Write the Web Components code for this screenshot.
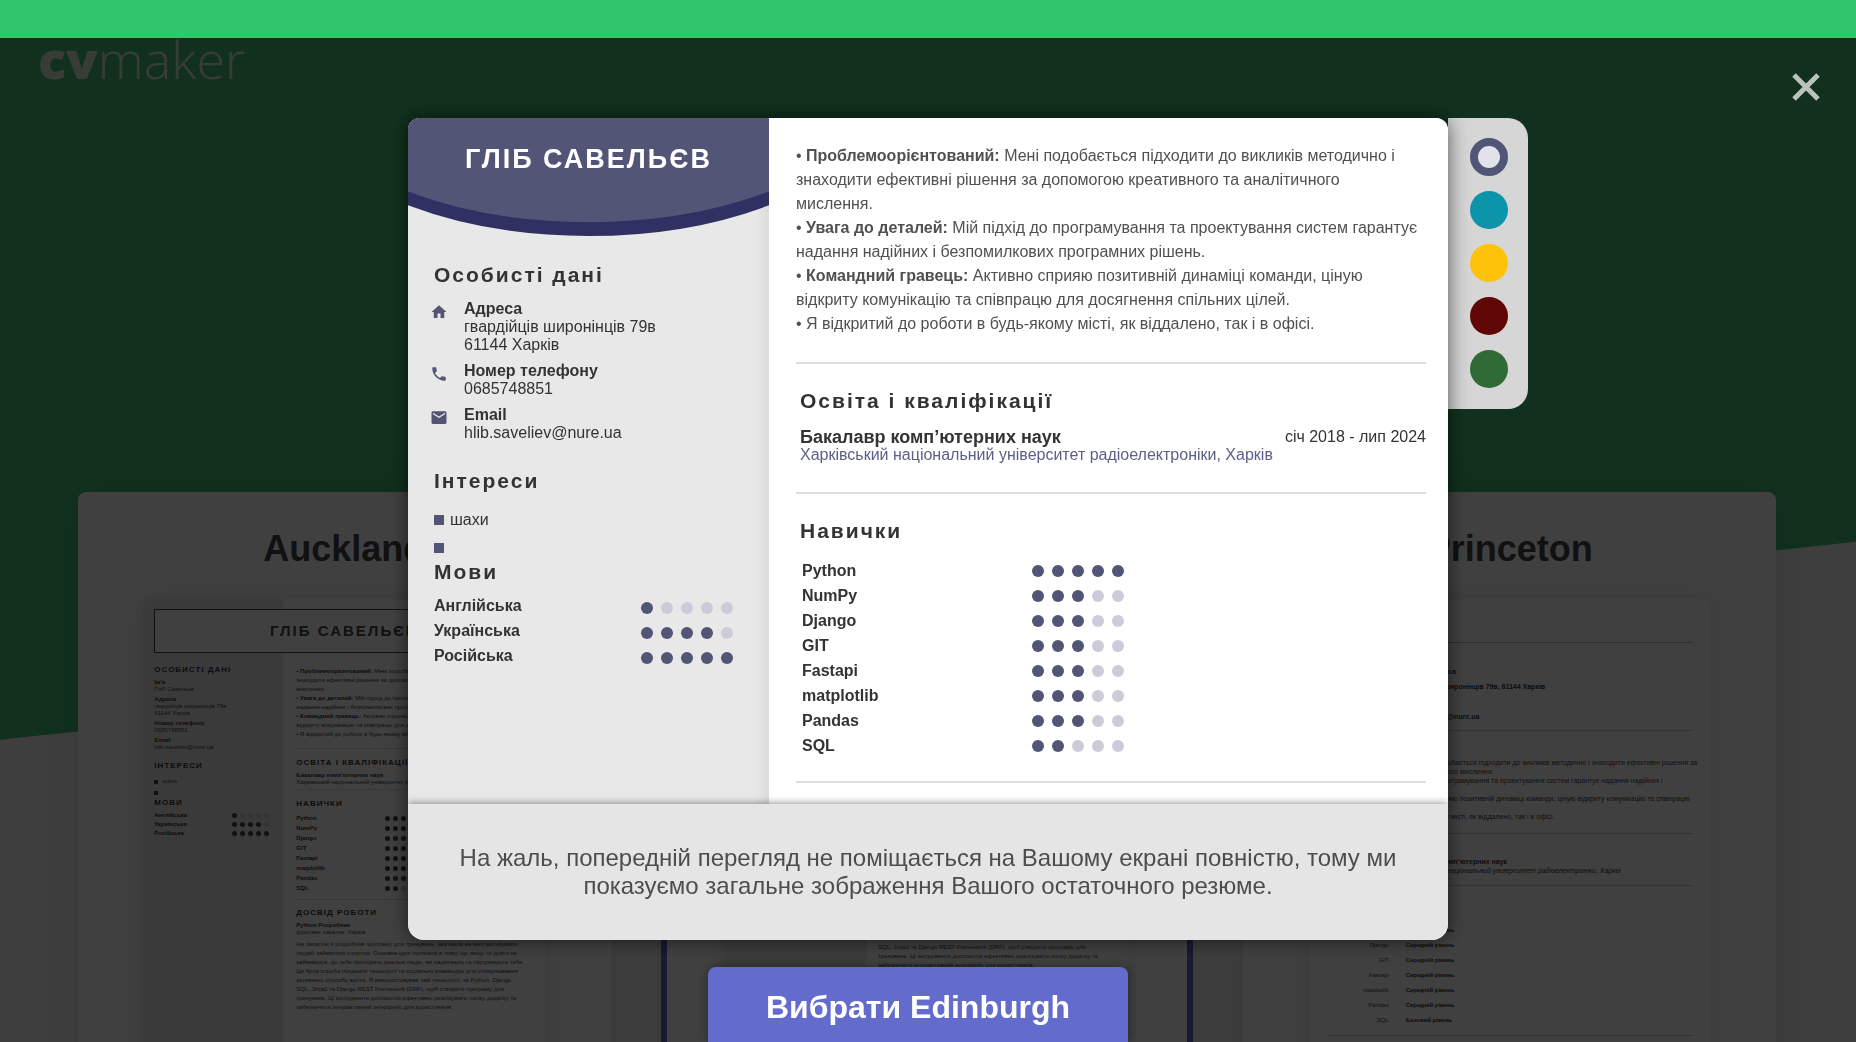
<!DOCTYPE html>
<html lang="uk">
<head>
<meta charset="utf-8">
<title>cvmaker</title>
<style>
  html, body { margin: 0; height: 100%; }
  body { font-family: "Liberation Sans", Arial, sans-serif; color: #333; overflow: hidden; }
</style>
</head>
<body>
<cv-app></cv-app>
<script>
const define = (name, html, setup) => {
  const template = document.createElement('template');
  template.innerHTML = html;
  customElements.define(name, class extends HTMLElement {
    constructor() {
      super();
      this.attachShadow({ mode: 'open' }).appendChild(template.content.cloneNode(true));
    }
    connectedCallback() { if (setup) setup(this, this.shadowRoot); }
  });
};

/* Five-dot level indicator */
define('dot-rating', `
<style>
  :host { display: flex; gap: var(--dot-gap, 8px); }
  i { width: var(--dot, 12px); height: var(--dot, 12px); border-radius: 50%; background: var(--dot-off, #cccbd7); }
  i.on { background: var(--dot-on, #525575); }
</style>`, (el, root) => {
  const level = Number(el.getAttribute('level'));
  el.setAttribute('role', 'img');
  for (let n = 1; n <= 5; n++) {
    const dot = document.createElement('i');
    if (n <= level) dot.className = 'on';
    root.appendChild(dot);
  }
});

define('site-logo', `
<style>
  :host { display: block; font: 300 52px/60px "Open Sans", sans-serif; color: #e0f0dc; }
  a { color: inherit; text-decoration: none; }
  b { font-weight: 800; }
</style>
<a href="#"><b>cv</b>maker</a>`);

/* Template card in the gallery */
define('template-card', `
<style>
  :host { display: flex; flex-direction: column; align-items: center; min-width: 0; box-sizing: border-box;
    background: #fff; border-radius: 8px; box-shadow: 0 0 60px rgba(0,0,0,.1); }
  :host([selected]) { border: 6px solid #6064c8; }
  h2 { min-height: 42px; margin: 36px 0 29px; font: bold 36px/42px "Liberation Sans", Arial, sans-serif; color: #444; }
  .sheet { width: 402px; flex: 1; border-radius: 8px; background: #fff; overflow: hidden; box-shadow: 0 0 24px rgba(0,0,0,.13); display: flex; flex-direction: column; }
  :host([selected]) h2 { margin-top: 30px; }
</style>
<h2></h2><div class="sheet"><slot></slot></div>`, (el, root) => {
  root.querySelector('h2').textContent = el.getAttribute('name') || '';
});

const summary = [
  ['Проблемоорієнтований:', 'Мені подобається підходити до викликів методично і', 'знаходити ефективні рішення за допомогою креативного та аналітичного', 'мислення.'],
  ['Увага до деталей:', 'Мій підхід до програмування та проектування систем гарантує', 'надання надійних і безпомилкових програмних рішень.'],
  ['Командний гравець:', 'Активно сприяю позитивній динаміці команди, ціную', 'відкриту комунікацію та співпрацю для досягнення спільних цілей.']
];
const summaryHtml = summary.map(([t, ...l]) => `• <b>${t}</b> ${l.join('<br>')}<br>`).join('') +
  '• Я відкритий до роботи в будь-якому місті, як віддалено, так і в офісі.';
const skills = [['Python', 5], ['NumPy', 3], ['Django', 3], ['GIT', 3], ['Fastapi', 3], ['matplotlib', 3], ['Pandas', 3], ['SQL', 2]];
const langs = [['Англійська', 1], ['Українська', 4], ['Російська', 5]];
const rows = list => list.map(([n, l]) => `<div class="row"><b>${n}</b><dot-rating level="${l}" aria-label="${l} / 5"></dot-rating></div>`).join('');

/* Auckland miniature */
define('resume-auckland', `
<style>
  :host { flex: 1; display: grid; grid-template-columns: 140px 1fr; grid-template-rows: auto 1fr; white-space: nowrap;
    background: linear-gradient(90deg, #e8e8e8 140px, #fff 140px); font-size: 6px; line-height: 7px; color: #444;
    --dot: 5px; --dot-gap: 3px; --dot-on: #444; --dot-off: #ccc; }
  .name { grid-column: 1 / 3; margin: 10px 11px 0; border: 1px solid #444; background: #fff; height: 42px; line-height: 41px;
    text-align: center; font-size: 15px; font-weight: bold; letter-spacing: 2px; color: #444; }
  h3 { margin: 0; font-size: 8px; line-height: 10px; letter-spacing: 1px; color: #333; }
  b { color: #333; }
  p { margin: 0; }
  .side { padding: 12px 14px 0 11px; }
  .side p { margin-bottom: 3px; }
  .side h3 { margin: 10px 0 5px; }
  .side h3:first-child { margin: 0 0 4px; }
  ul { margin: 0; padding: 0; list-style: none; }
  li { display: flex; align-items: center; gap: 4px; height: 11px; }
  li::before { content: ""; width: 4px; height: 4px; background: #444; }
  .side h3.tight { margin: 0 0 3px; }
  .side .row { display: flex; justify-content: space-between; align-items: center; height: 9px; }
  .main { padding: 14px 12px 0 13px; }
  .main h3 { margin-bottom: 4px; }
  .text { line-height: 9px; }
  hr { border: 0; height: 1px; background: #ddd; margin: 9px 0; }
  .main hr.near { margin: 3px 0 9px; }
  .main hr.after { margin: 6px 0 8px; }
  .main .row { display: grid; grid-template-columns: 89px 1fr; align-items: center; line-height: 10px; height: 10px; }
</style>
<div class="name">ГЛІБ САВЕЛЬЄВ</div>
<div class="side">
  <h3>ОСОБИСТІ ДАНІ</h3>
  <p><b>Ім'я</b><br>Гліб Савельєв</p>
  <p><b>Адреса</b><br>гвардійців широнінців 79в<br>61144 Харків</p>
  <p><b>Номер телефону</b><br>0685748851</p>
  <p><b>Email</b><br>hlib.saveliev@nure.ua</p>
  <h3>ІНТЕРЕСИ</h3>
  <ul><li>шахи</li><li></li></ul>
  <h3 class="tight">МОВИ</h3>
  ${rows(langs)}
</div>
<div class="main">
  <p class="text">${summaryHtml}</p>
  <hr>
  <h3>ОСВІТА І КВАЛІФІКАЦІЇ</h3>
  <p><b>Бакалавр комп’ютерних наук</b><br>Харківський національний університет радіоелектроніки, Харків</p>
  <hr class="near">
  <h3>НАВИЧКИ</h3>
  ${rows(skills)}
  <hr class="after">
  <h3>ДОСВІД РОБОТИ</h3>
  <p><b>Python Розробник</b><br>фриланс хакатон, Харків</p>
  <slot></slot>
</div>`);

const jobLines = [
  'На хакатоні я розробляв програму для тренувань, яка мала на меті мотивувати',
  'людей займатися спортом. Основна ідея полягала в тому, що якщо ти довго не',
  'займаєшся, до тебе приходять реальні люди, які надихають та підтримують тебе.',
  'Це була спроба поєднати технології та соціальну взаємодію для стимулювання',
  'активного способу життя. Я використовував такі технології, як Python, Django,',
  'SQL, Jinja2 та Django REST Framework (DRF), щоб створити програму для',
  'тренувань. Ці інструменти допомогли ефективно реалізувати логіку додатку та',
  'забезпечити інтерактивний інтерфейс для користувачів.'
];
define('job-text', `
<style>
  :host { display: block; font-size: 6px; line-height: 9px; white-space: nowrap; color: #444; }
  p { margin: 4px 0 0; }
</style><p></p>`, (el, root) => {
  const from = Number(el.getAttribute('from') || 0);
  root.querySelector('p').innerHTML = jobLines.slice(from).join('<br>');
});

/* Edinburgh miniature: only its lower part shows below the preview */
define('resume-edinburgh-mini', `
<style>
  :host { flex: 1; display: flex; background: linear-gradient(90deg, #e8e8e8 140px, #fff 140px); }
  .main { margin-left: 152px; padding-top: 340px; }
</style>
<div class="main"><job-text from="5"></job-text></div>`);

/* Princeton miniature */
define('resume-princeton', `
<style>
  :host { flex: 1; display: block; padding: 43px 18px 0 19px; font-size: 7px; line-height: 9px; white-space: nowrap; color: #444; }
  hr { border: 0; height: 1px; background: #ccc; margin: 0; }
  hr.dark { background: #bbb; }
  dl { display: grid; grid-template-columns: 61px 1fr; column-gap: 17px; margin: 0; }
  dt { text-align: right; } dd { margin: 0; font-weight: bold; color: #333; }
  .person { padding: 21px 0 6px; line-height: 15px; }
  .text { margin: 0; padding: 27px 0 12px; }
  .edu { padding: 23px 0 10px; }
  .edu i { font-weight: normal; }
  .skills { padding: 22px 0 7px; font-size: 6px; line-height: 15px; }
</style>
<hr class="dark">
<dl class="person">
  <dt>Ім'я</dt><dd>Гліб Савельєв</dd>
  <dt>Адреса</dt><dd>гвардійців широнінців 79в, 61144 Харків</dd>
  <dt>Телефон</dt><dd>0685748851</dd>
  <dt>Email</dt><dd>hlib.saveliev@nure.ua</dd>
</dl>
<hr>
<p class="text">• <b>Проблемоорієнтований:</b> Мені подобається підходити до викликів методично і знаходити ефективні рішення за<br>допомогою креативного та аналітичного мислення.<br>• <b>Увага до деталей:</b> Мій підхід до програмування та проектування систем гарантує надання надійних і<br>безпомилкових програмних рішень.<br>• <b>Командний гравець:</b> Активно сприяю позитивній динаміці команди, ціную відкриту комунікацію та співпрацю<br>для досягнення спільних цілей.<br>• Я відкритий до роботи в будь-якому місті, як віддалено, так і в офісі.</p>
<hr>
<dl class="edu"><dt></dt><dd>Бакалавр комп’ютерних наук<br><i>Харківський національний університет радіоелектроніки, Харків</i></dd></dl>
<hr>
<dl class="skills">${skills.map(([n, l]) => `<dt>${n}</dt><dd>${l === 5 ? 'Експерт' : l === 2 ? 'Базовий рівень' : 'Середній рівень'}</dd>`).join('')}</dl>
<hr>`);

/* Full Edinburgh résumé in the preview */
define('resume-edinburgh', `
<style>
  :host { display: grid; grid-template-columns: 361px 1fr; background: #fff; font-size: 16px; line-height: 18px; }
  aside { background: linear-gradient(90deg, transparent 96%, rgba(0,0,0,.05)), #e8e8e8; }
  header { display: grid; }
  header > * { grid-area: 1 / 1; }
  svg { display: block; }
  header svg { width: 100%; height: 119px; }
  h1 { margin: 0; padding-top: 25px; text-align: center; font-size: 27px; line-height: 32px; letter-spacing: 2px; color: #fff; }
  h2 { margin: 0; font-size: 21px; line-height: 24px; letter-spacing: 2px; }
  .side { padding: 26px 36px 0 26px; }
  .contact { display: grid; grid-template-columns: 30px 1fr; row-gap: 8px; margin: 13px 0 27px; }
  .contact svg { width: 18px; height: 18px; margin: 3px 0 0 -4px; fill: #525575; }
  p { margin: 0; }
  ul { margin: 18px 0 3px; padding: 0; list-style: none; display: grid; gap: 10px; }
  li { display: flex; align-items: center; gap: 6px; height: 18px; }
  li::before { content: ""; width: 10px; height: 10px; background: #525575; }
  .row { display: flex; justify-content: space-between; align-items: center; height: 25px; }
  .langs { margin-top: 9px; }
  .langs dot-rating { margin-top: 4px; }
  main { padding: 26px 22px 0 27px; }
  .text { line-height: 24px; color: #505050; white-space: nowrap; }
  hr { border: 0; height: 2px; background: #ddd; margin: 26px 0 25px; }
  section { padding-left: 4px; }
  .edu { display: grid; grid-template-columns: 1fr auto; margin-top: 15px; white-space: nowrap; }
  .edu b { font-size: 18px; }
  .edu a { grid-column: 1 / 3; color: #5c5f89; text-decoration: none; }
  .skills { margin-top: 15px; }
  .skills .row { display: grid; grid-template-columns: 230px 1fr; padding-left: 2px; }
  .skills b { padding-top: 1px; }
  hr.edge { margin: 28px 0 25px; }
  hr.last { margin: 23px 0 25px; }
</style>
<aside>
  <header>
    <svg viewBox="0 0 361 120" preserveAspectRatio="none" aria-hidden="true">
      <path fill="#2e3161" d="M0 0H361V88Q280 119 180.500 119Q81 119 0 88Z"/>
      <path fill="#525575" d="M0 0H361V74Q280 105 180.500 105Q81 105 0 74Z"/>
    </svg>
    <h1>ГЛІБ САВЕЛЬЄВ</h1>
  </header>
  <div class="side">
    <h2>Особисті дані</h2>
    <div class="contact">
      <svg viewBox="0 0 24 24" aria-hidden="true"><path d="M10 20v-6h4v6h5v-8h3L12 3 2 12h3v8z"/></svg>
      <p><b>Адреса</b><br>гвардійців широнінців 79в<br>61144 Харків</p>
      <svg viewBox="0 0 24 24" aria-hidden="true"><path d="M20 15.500c-1.250 0-2.450-.200-3.570-.570-.350-.110-.740-.030-1.020.240l-2.200 2.200c-2.830-1.440-5.150-3.750-6.590-6.590l2.200-2.210c.280-.260.360-.650.250-1C8.700 6.450 8.500 5.250 8.500 4c0-.550-.450-1-1-1H4c-.550 0-1 .450-1 1 0 9.390 7.610 17 17 17 .550 0 1-.450 1-1v-3.500c0-.550-.450-1-1-1z"/></svg>
      <p><b>Номер телефону</b><br>0685748851</p>
      <svg viewBox="0 0 24 24" aria-hidden="true"><path d="M20 3H4c-1.100 0-2 .900-2 2v13c0 1.100.900 2 2 2h16c1.100 0 2-.900 2-2V5c0-1.100-.900-2-2-2zm0 4l-8 5-8-5V5l8 5 8-5z"/></svg>
      <p><b>Email</b><br>hlib.saveliev@nure.ua</p>
    </div>
    <h2>Інтереси</h2>
    <ul><li>шахи</li><li></li></ul>
    <h2>Мови</h2>
    <div class="langs">${rows(langs)}</div>
  </div>
</aside>
<main>
  <p class="text">${summaryHtml}</p>
  <hr>
  <section>
    <h2>Освіта і кваліфікації</h2>
    <div class="edu"><b>Бакалавр комп’ютерних наук</b><span>січ 2018 - лип 2024</span>
    <a href="#">Харківський національний університет радіоелектроніки, Харків</a></div>
  </section>
  <hr class="edge">
  <section>
    <h2>Навички</h2>
    <div class="skills">${rows(skills)}</div>
  </section>
  <hr class="last">
</main>`);

define('color-picker', `
<style>
  :host { display: block; background: #d6d6d6; border-radius: 0 20px 20px 0; }
  fieldset { border: 0; margin: 0; padding: 20px 20px 21px 22px; display: grid; gap: 15px; }
  input { appearance: none; display: block; margin: 0; width: 38px; height: 38px; border-radius: 50%; background: var(--c); }
  input:checked { background: #e2e3ea; border: 8px solid var(--c); }
</style>
<fieldset aria-label="Колір">
  <input type="radio" name="c" checked style="--c:#525575" aria-label="Синій">
  <input type="radio" name="c" style="--c:#0b94aa" aria-label="Бірюзовий">
  <input type="radio" name="c" style="--c:#ffc20a" aria-label="Жовтий">
  <input type="radio" name="c" style="--c:#610606" aria-label="Червоний">
  <input type="radio" name="c" style="--c:#306a35" aria-label="Зелений">
</fieldset>`);

define('preview-overlay', `
<style>
  :host { position: fixed; inset: 38px 0 0; z-index: 2; background: rgba(0,0,0,.75); box-sizing: border-box; padding-top: 80px;
    display: flex; flex-direction: column; align-items: center; gap: 27px; }
  .modal { position: relative; flex: 1; min-height: 0; width: min(1040px, 100%); }
  .body { height: 100%; display: flex; flex-direction: column; overflow: hidden; border-radius: 12px 12px 16px 16px; background: #fff; }
  .frame { height: 100%; border-radius: 12px 12px 16px 16px; box-shadow: 0 0 20px rgba(0,0,0,.6); position: relative; }
  resume-edinburgh { flex: 1; min-height: 0; }
  .note { position: relative; margin: 0; padding: 40px 24px; background: #e5e5e5; color: #4d4d4d; font-size: 24px; line-height: 28px; text-align: center; box-shadow: 0 0 8px rgba(0,0,0,.5); }
  color-picker { position: absolute; left: 100%; top: 0; }
  .close { position: absolute; top: 33px; right: 34px; width: 32px; height: 32px; padding: 0; border: 0; background: none; }
  .close svg { display: block; width: 32px; height: 32px; stroke: #b9c2bd; stroke-width: 5; }
  .choose { box-sizing: border-box; width: 420px; height: 75px; margin-right: 20px; padding: 4px 0 0; border: 0; border-radius: 8px 8px 0 0; background: #636ccd; color: #fff;
    font: bold 32px/40px "Liberation Sans", Arial, sans-serif; box-shadow: 0 0 12px rgba(0,0,0,.4); }
</style>
<div class="modal" role="dialog" aria-label="Edinburgh">
  <color-picker></color-picker>
  <div class="frame"><div class="body">
    <resume-edinburgh></resume-edinburgh>
    <p class="note">На жаль, попередній перегляд не поміщається на Вашому екрані повністю, тому ми показуємо загальне зображення Вашого остаточного резюме.</p>
  </div></div>
</div>
<button class="choose" type="button">Вибрати Edinburgh</button>
<button class="close" type="button" aria-label="Закрити"><svg viewBox="0 0 32 32" aria-hidden="true"><path d="M4 4L28 28M28 4L4 28"/></svg></button>`);

define('cv-app', `
<style>
  :host { display: flex; flex-direction: column; height: 100vh; overflow: hidden; background: #f8f8f8; position: relative; }
  .bar { height: 38px; background: #30c66b; flex: none; position: relative; }
  .hero { position: absolute; inset: 0; background: #44c074; clip-path: polygon(0 0, 100% 0, 100% 52%, 0 71%); }
  site-logo { flex: none; position: relative; padding: 0 38px; height: 60px; margin-top: -9px; margin-bottom: 403px; }
  .gallery { position: relative; flex: none; height: 640px; display: grid; grid-template-columns: repeat(3, minmax(0, 1fr)); gap: 50px; padding: 0 80px 0 78px; }
</style>
<div class="hero"></div>
<div class="bar"></div>
<site-logo></site-logo>
<div class="gallery">
  <template-card name="Auckland"><resume-auckland><job-text></job-text></resume-auckland></template-card>
  <template-card selected><resume-edinburgh-mini></resume-edinburgh-mini></template-card>
  <template-card name="Princeton"><resume-princeton></resume-princeton></template-card>
</div>
<preview-overlay></preview-overlay>`);
</script>
</body>
</html>
